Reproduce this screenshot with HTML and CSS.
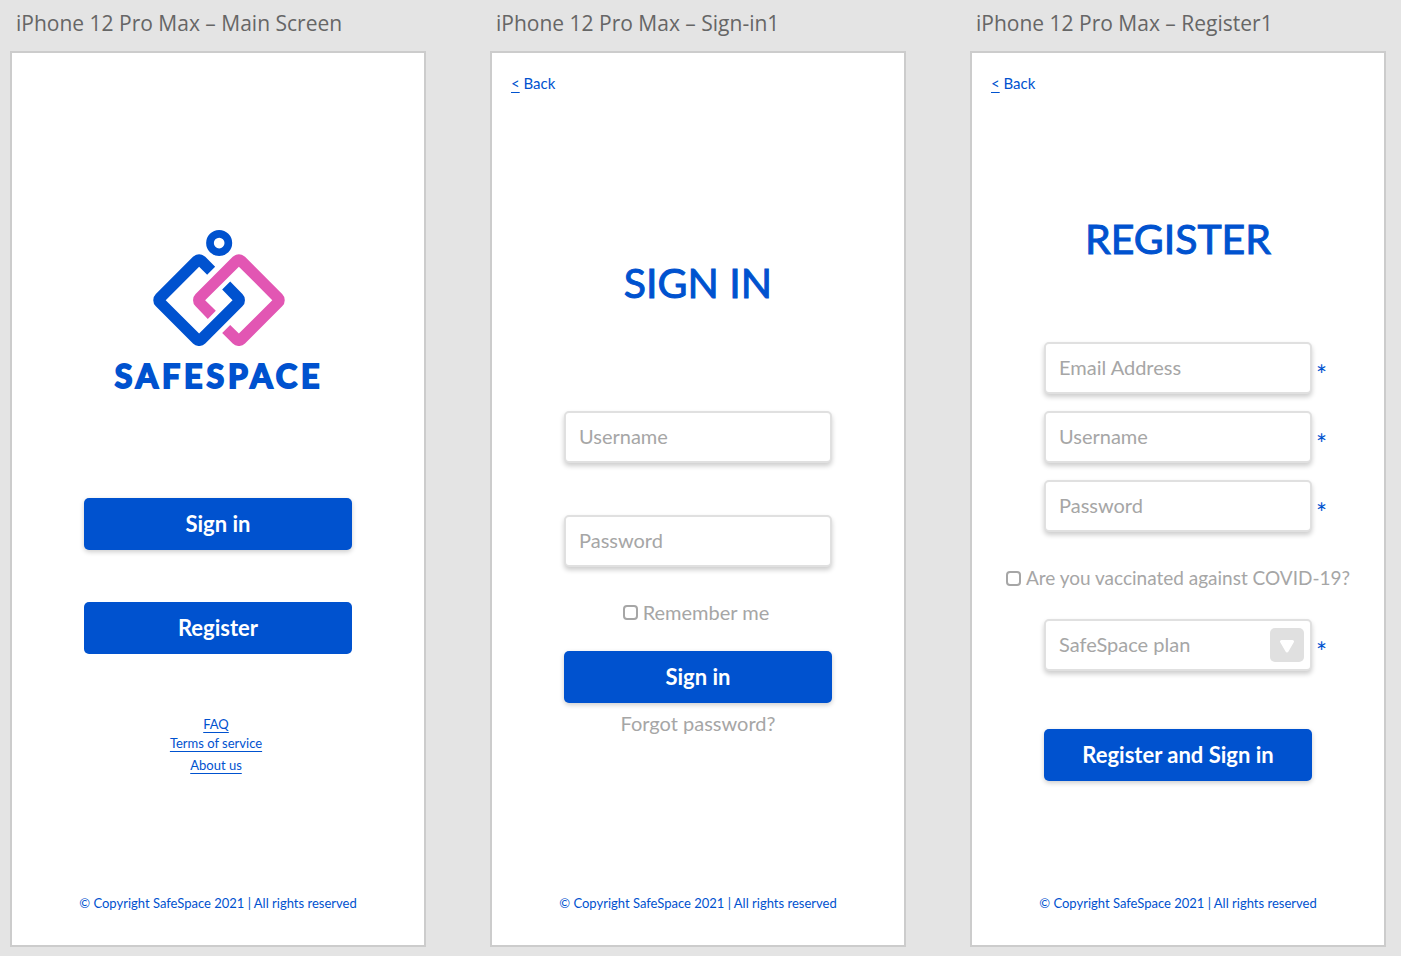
FILE: index.html
```html
<!DOCTYPE html>
<html lang="en">
<head>
<meta charset="utf-8">
<meta name="viewport" content="width=device-width, initial-scale=1">
<title>SafeSpace screens</title>
<link rel="stylesheet" href="styles.css">
</head>
<body>
<main class="boards">
  <section class="board">
    <h2 class="board-name">iPhone 12 Pro Max – Main Screen</h2>
    <div class="screen">
      <div class="brand">
        <svg class="brand-mark" viewBox="160 44 395 348" aria-hidden="true">
          <circle cx="358" cy="83" r="27.5" fill="none" stroke="#0052cf" stroke-width="23"/>
          <path fill="#e256b3" d="M324 310L348 286L316 254L417 154L517 254L417 354L391 328L367 352L398.6 383.6A26 26 0 0 0 435.4 383.6L546.6 272.4A26 26 0 0 0 546.6 235.6L435.4 124.4A26 26 0 0 0 398.6 124.4L287.4 235.6A26 26 0 0 0 287.4 272.4Z"/>
          <path fill="#0052cf" d="M346 154L322 178L298 154L198 254L298 354L398 254L367 222L391 198L427.6 235.6A26 26 0 0 1 427.6 272.4L316.4 383.6A26 26 0 0 1 279.6 383.6L168.4 272.4A26 26 0 0 1 168.4 235.6L279.6 124.4A26 26 0 0 1 316.4 124.4Z"/>
        </svg>
        <h1 class="brand-name">SAFESPACE</h1>
      </div>
      <div class="actions">
        <button class="button" type="button">Sign in</button>
        <button class="button button-flat" type="button">Register</button>
      </div>
      <nav class="links">
        <a href="#faq">FAQ</a>
        <a href="#terms">Terms of service</a>
        <a class="link-about" href="#about">About us</a>
      </nav>
      <footer class="copyright">© Copyright SafeSpace 2021 | All rights reserved</footer>
    </div>
  </section>

  <section class="board">
    <h2 class="board-name">iPhone 12 Pro Max – Sign-in1</h2>
    <div class="screen">
      <a class="back" href="#main"><span class="back-arrow">&lt;</span> Back</a>
      <h1 class="title title-signin">SIGN IN</h1>
      <form class="form">
        <div class="row"><input class="field" type="text" placeholder="Username" aria-label="Username"></div>
        <div class="row row-spaced"><input class="field" type="password" placeholder="Password" aria-label="Password"></div>
        <label class="check check-remember"><input class="box" type="checkbox">Remember me</label>
        <button class="button" type="button">Sign in</button>
        <a class="forgot" href="#forgot">Forgot password?</a>
      </form>
      <footer class="copyright">© Copyright SafeSpace 2021 | All rights reserved</footer>
    </div>
  </section>

  <section class="board">
    <h2 class="board-name">iPhone 12 Pro Max – Register1</h2>
    <div class="screen">
      <a class="back" href="#main"><span class="back-arrow">&lt;</span> Back</a>
      <h1 class="title title-register">REGISTER</h1>
      <form class="form form-register">
        <div class="row"><input class="field" type="email" placeholder="Email Address" aria-label="Email Address"><span class="star">*</span></div>
        <div class="row"><input class="field" type="text" placeholder="Username" aria-label="Username"><span class="star">*</span></div>
        <div class="row"><input class="field" type="password" placeholder="Password" aria-label="Password"><span class="star">*</span></div>
        <label class="check check-vaccine"><input class="box" type="checkbox">Are you vaccinated against COVID-19?</label>
        <div class="row">
          <div class="picker">
            <select class="field" aria-label="SafeSpace plan"><option>SafeSpace plan</option></select>
            <svg class="picker-arrow" viewBox="0 0 34 34" aria-hidden="true">
              <rect width="34" height="34" rx="5" fill="#e0e0e0"/>
              <path d="M11.500 13.500H22.500L17 23Z" fill="#fff" stroke="#fff" stroke-width="3" stroke-linejoin="round"/>
            </svg>
          </div>
          <span class="star">*</span>
        </div>
        <button class="button button-submit" type="button">Register and Sign in</button>
      </form>
      <footer class="copyright">© Copyright SafeSpace 2021 | All rights reserved</footer>
    </div>
  </section>
</main>
</body>
</html>
```
FILE: styles.css
```css
* {
  box-sizing: border-box;
}

body {
  margin: 0;
  background: #e4e4e4;
  color: #0052cf;
  font-family: Lato, sans-serif;
}

a {
  color: inherit;
}

.boards {
  display: grid;
  grid-template-columns: repeat(3, minmax(0, 1fr));
  gap: 64px;
  min-height: 100vh;
  padding: 8px 15px 9px 10px;
}

.board {
  display: flex;
  flex-direction: column;
}

.board-name {
  margin: 0 0 13px;
  padding-left: 6px;
  color: #666;
  font: 400 21px/30px "Open Sans", sans-serif;
  white-space: nowrap;
}

.screen {
  flex: 1;
  display: flex;
  flex-direction: column;
  align-items: center;
  padding-bottom: 32px;
  border: 2px solid #ccc;
  background: #fff;
}

.brand {
  display: flex;
  flex-direction: column;
  align-items: center;
  padding: 177px 0 0 2px;
}

.brand-mark {
  width: 132px;
}

.brand-name {
  margin: 10px 0 0;
  font-size: 32px;
  line-height: 40px;
  font-weight: 700;
  letter-spacing: 4px;
  -webkit-text-stroke: 2px #0052cf;
  stroke-linejoin: round;
}

.actions {
  display: flex;
  flex-direction: column;
  gap: 52px;
  padding-top: 102px;
}

.button {
  width: 268px;
  height: 52px;
  padding: 0;
  border: 0;
  border-radius: 5px;
  background: #0052cf;
  box-shadow: 0 2px 5px rgba(0, 0, 0, 0.2);
  color: #fff;
  font: 700 22px/26px Lato, sans-serif;
}

.button-flat {
  box-shadow: none;
}

.links {
  display: flex;
  flex-direction: column;
  align-items: center;
  padding: 61px 4px 0 0;
  font-size: 13px;
  line-height: 19px;
}

.links a {
  text-underline-offset: 3px;
}

.link-about {
  padding-top: 3px;
}

.copyright {
  margin-top: auto;
  font-size: 13px;
  line-height: 20px;
}

.back {
  align-self: flex-start;
  padding: 20px 0 0 19px;
  font-size: 15px;
  line-height: 20px;
  text-decoration: none;
}

.back-arrow {
  text-decoration: underline;
  text-underline-offset: 3px;
}

.title {
  margin: 0;
  font-size: 41px;
  line-height: 52px;
  font-weight: 400;
  -webkit-text-stroke: 1px #0052cf;
}

.title-signin {
  padding: 164px 0 102px;
}

.title-register {
  padding: 120px 0 77px;
}

.form {
  display: flex;
  flex-direction: column;
  align-items: center;
  width: 100%;
}

.form-register {
  gap: 17px;
}

.row {
  display: grid;
  grid-template-columns: 1fr 268px 1fr;
  align-items: center;
  width: 100%;
}

.row-spaced {
  padding-top: 52px;
}

.field {
  grid-column: 2;
  width: 100%;
  height: 52px;
  padding: 0 13px 2px;
  border: 2px solid #e0e0e0;
  border-radius: 5px;
  background: #fff;
  box-shadow: 0 3px 5px rgba(0, 0, 0, 0.2);
  color: #a6a6a6;
  font: 400 20px/24px Lato, sans-serif;
  appearance: none;
}

.field::placeholder {
  color: #a6a6a6;
  opacity: 1;
}

.star {
  grid-column: 3;
  padding: 13px 0 0 4px;
  font-size: 26px;
  line-height: 24px;
}

.picker {
  position: relative;
  grid-column: 2;
}

.picker-arrow {
  position: absolute;
  top: 9px;
  right: 8px;
  width: 34px;
  height: 34px;
  pointer-events: none;
}

.check {
  display: flex;
  align-items: center;
  gap: 5px;
  color: #a6a6a6;
  font-size: 20px;
  line-height: 24px;
  white-space: nowrap;
}

.check-remember {
  padding: 33px 4px 27px 0;
}

.check-vaccine {
  padding: 17px 0 12px;
  font-size: 19px;
}

.box {
  width: 15px;
  height: 15px;
  margin: 0;
  border: 2px solid #a6a6a6;
  border-radius: 4px;
  background: #fff;
  appearance: none;
}

.forgot {
  padding-top: 8px;
  color: #a6a6a6;
  font-size: 20px;
  line-height: 24px;
  text-decoration: none;
}

.button-submit {
  margin-top: 41px;
}
```
